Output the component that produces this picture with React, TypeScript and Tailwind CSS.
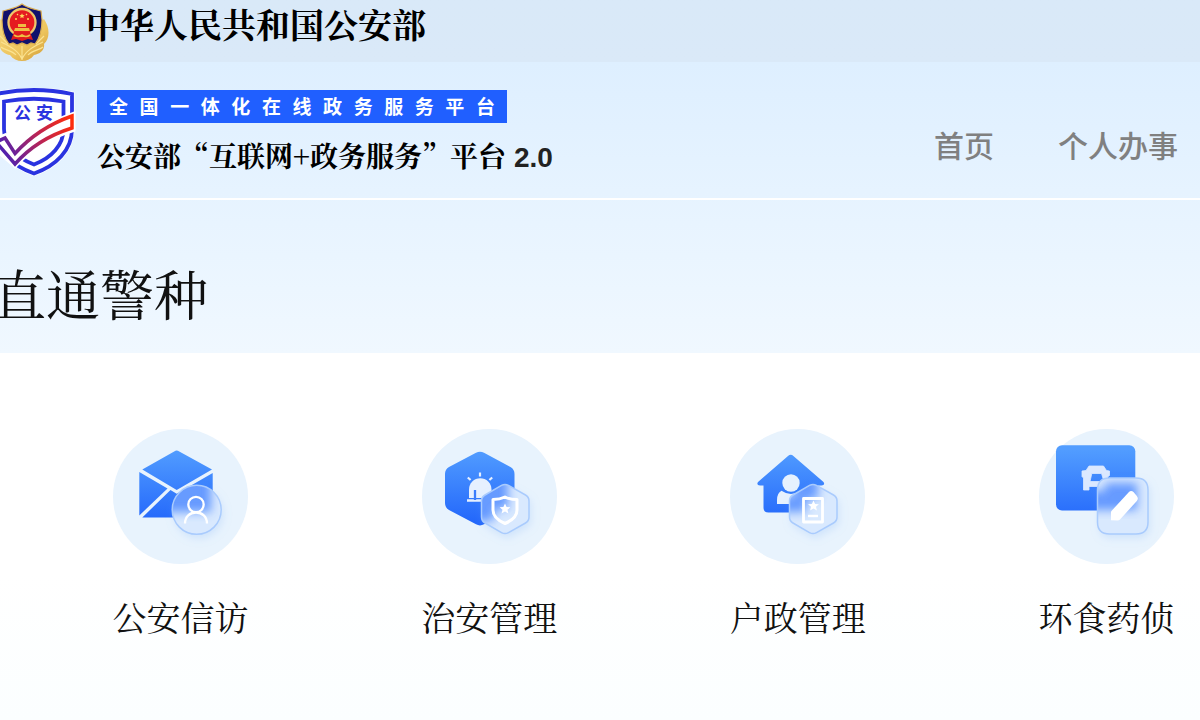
import type { ReactNode } from "react";

const SERVICES = [
  { label: "公安信访", icon: <MailIcon /> },
  { label: "治安管理", icon: <SirenIcon /> },
  { label: "户政管理", icon: <HouseIcon /> },
  { label: "环食药侦", icon: <CarIcon /> },
];

const BANNER = "全国一体化在线政务服务平台";

const HEX_BADGE = "M79.5 56.4q3.5-2 7 0L103.500 66q3.500 2 3.500 6v16q0 4-3.500 6L86.500 103.600q-3.500 2-7 0L63 94q-3.500-2-3.500-6V72q0-4 3.500-6Z";
const STAR = "M0-5.500 1.600-2 5.400-1.700 2.500.8 3.400 4.500 0 2.500-3.400 4.500-2.500.8-5.400-1.700-1.600-2Z";

// frosted badge: the shape behind it shows through, blurred
function Glass({ id, d, behind, children }: { id: string; d: string; behind: string; children: ReactNode }) {
  return (
    <>
      <defs>
        <clipPath id={`${id}-clip`}>
          <path d={d} />
        </clipPath>
        <filter id={`${id}-blur`} x="-30%" y="-30%" width="160%" height="160%">
          <feGaussianBlur stdDeviation="5" />
        </filter>
        <filter id={`${id}-shadow`} x="-40%" y="-40%" width="180%" height="180%">
          <feDropShadow dx="2" dy="4" stdDeviation="4" floodColor="#7fb0f5" floodOpacity="0.25" />
        </filter>
      </defs>
      <path d={d} fill="#d9e9fe" filter={`url(#${id}-shadow)`} />
      <g clipPath={`url(#${id}-clip)`}>
        <path d={behind} fill="#3f80ff" opacity="0.75" filter={`url(#${id}-blur)`} />
      </g>
      <path d={d} fill="none" stroke="#a9cbfd" strokeWidth="1.5" />
      {children}
    </>
  );
}

function IconDisc({ id, children }: { id: string; children: ReactNode }) {
  return (
    <svg viewBox="0 0 135 135" className="size-full" aria-hidden="true">
      <defs>
        <linearGradient id={`${id}-fill`} gradientUnits="userSpaceOnUse" x1="0" y1="20" x2="0" y2="92">
          <stop offset="0" stopColor="#529dff" />
          <stop offset="1" stopColor="#2468fb" />
        </linearGradient>
      </defs>
      {children}
    </svg>
  );
}

function MailIcon() {
  return (
    <IconDisc id="mail">
      <g fill="url(#mail-fill)">
        <path d="M62.500 21.800q1.200-.8 2.400 0L99 40.500 63.700 61 29.300 40.500Z" />
        <path d="M26.300 43 54.500 59.500 26.300 86.500Z" />
        <path d="M29.300 88.500 57.500 61l6.200 3.700 36-20.700v44.500Z" />
      </g>
      <Glass
        id="mail-glass"
        d="M59.200 80.800a24.500 24.500 0 1 1 49 0a24.500 24.500 0 1 1-49 0Z"
        behind="M26 43h72v40H26Z"
      >
        <g fill="none" stroke="#fff" strokeWidth="2.300">
          <circle cx="83" cy="75.500" r="7.700" />
          <path d="M72 94.500c0-7 5-11 11-11s11 4 11 11" />
        </g>
      </Glass>
    </IconDisc>
  );
}

function SirenIcon() {
  const hex = "M54 23.800q4-2.300 8 0L88.500 38q4 2.300 4 7v30q0 4.500-4 7L62 95.300q-4 2.300-8 0L27 81q-4-2.500-4-7V45q0-4.700 4-7Z";
  return (
    <IconDisc id="siren">
      <path d={hex} fill="url(#siren-fill)" />
      <path d="M47 69V60.500a11.200 11.200 0 0 1 22.500 0V69Z" fill="#e6f0ff" />
      <path d="M45 71.500h25" stroke="#e6f0ff" strokeWidth="2.500" />
      <path d="M53 61v10" stroke="#3b7dfc" strokeWidth="2.300" />
      <path d="M58 43.500v4M45.800 48.500l2.800 2.500M70.200 48.500l-2.800 2.500" stroke="#e6f0ff" strokeWidth="2.200" />
      <Glass id="siren-glass" d={HEX_BADGE} behind="M30 30h56v50H72v12H40Z">
        <path
          d="M83 68c4 2 8 2.500 12 2.500V81c0 6-5 10.500-12 13.500-7-3-12-7.500-12-13.500V70.500c4 0 8-.5 12-2.500Z"
          fill="none"
          stroke="#fff"
          strokeWidth="3"
          strokeLinejoin="round"
        />
        <path d={STAR} transform="translate(83 80)" fill="#fff" />
      </Glass>
    </IconDisc>
  );
}

function HouseIcon() {
  return (
    <IconDisc id="house">
      <path
        d="M58 27q2.700-2.500 5.400 0L93.500 53q2 3-2 3.500H88v22q0 5-5 5H38.500q-5 0-5-5v-22H30q-4-.5-2-3.500Z"
        fill="url(#house-fill)"
      />
      <circle cx="61" cy="54" r="8.700" fill="#e6f1fe" />
      <path d="M47 75v-4q0-7 4.500-9.300 9.500 6.500 19 0Q78 65 78 71v4Z" fill="#e6f1fe" />
      <Glass id="house-glass" d={HEX_BADGE} behind="M64 48h24v22H76v13H40V68h24Z">
        <path d="M73.500 69.500h19v23.500h-19Z" fill="none" stroke="#fff" strokeWidth="2.800" strokeLinejoin="round" />
        <path d={STAR} transform="translate(83.500 77)" fill="#fff" />
        <path d="M78 87h10" stroke="#fff" strokeWidth="2.400" />
      </Glass>
    </IconDisc>
  );
}

function CarIcon() {
  return (
    <IconDisc id="car">
      <rect x="17" y="16.200" width="79.300" height="65.300" rx="6" fill="url(#car-fill)" />
      <path
        d="M50 37h14.500l3 4.500 3 .5v4.500l-2 1.500V61h-5v-3.500H50V61h-5.500V49l-1.500-1.500V42l4-.5ZM52.800 44.500 51 52.500h14l-2.500-8Z"
        fill="#dbe8ff"
        stroke="#dbe8ff"
        strokeWidth="0.800"
        fillRule="evenodd"
      />
      <Glass
        id="car-glass"
        d="M70.500 49H97q12 0 12 12v32q0 12-12 12H70.500q-12 0-12-12V61q0-12 12-12Z"
        behind="M66 54h32v27H40V62h26Z"
      >
        <path
          d="M72 91.300V82.500L89.500 63.500q2.500-2.500 5-.5l3.300 4q2 2.500 0 5L81 90.500q-1 1-2.500 1Z"
          fill="#fff"
        />
      </Glass>
    </IconDisc>
  );
}

function PoliceEmblem() {
  return (
    <svg viewBox="0 0 56 60" className="h-15 w-14 shrink-0" aria-hidden="true">
      <defs>
        <linearGradient id="gold" x1="0" y1="0" x2="1" y2="1">
          <stop offset="0" stopColor="#f8dc85" />
          <stop offset="0.6" stopColor="#edc45c" />
          <stop offset="1" stopColor="#cf9a35" />
        </linearGradient>
      </defs>
      <path
        d="M6 17C0 26 0 36 6 42c-1 6 4 10 10 11 3 4 7 6 12 6s9-2 12-6c6-1 11-5 10-11 6-6 6-16 0-25L28 34Z"
        fill="url(#gold)"
      />
      <path
        d="M28 57C24 48 15 44 7 40M28 57c4-9 13-13 21-17M28 58V44M22 53C18 48 10 48 7 45M34 53c4-5 12-5 15-8M6 34l8 8M50 34l-8 8"
        fill="none"
        stroke="#fbe391"
        strokeWidth="1.200"
      />
      <path
        d="M28 2c5 4 12 5 19 7l1 9c0 12-3 19-7 24l-4-1-4 2-5-2-5 2-4-2-4 1C11 37 8 30 8 18l1-9c7-2 14-3 19-7Z"
        fill="#11116c"
        stroke="#d9ad52"
        strokeWidth="1.200"
      />
      <circle cx="28" cy="20.500" r="13.500" fill="#e51c20" stroke="#edc76a" strokeWidth="2.300" />
      <path d="M20 30h16l3 8-5-1-6 2-6-2-5 1Z" fill="#df1a1d" />
      <path d="M21 26h14l1 3H20ZM24 22h8v3h-8Z" fill="#efbd43" />
      <path d="M20 33q4 3 8 0 4 3 8 0" fill="none" stroke="#efbd43" strokeWidth="1.600" />
      <path d={STAR} transform="translate(28 14) scale(.5)" fill="#ffd95b" />
      <path d="M21 17h2M23 13l1-1M33 13l-1-1M35 17h-2" stroke="#ffd95b" strokeWidth="1.300" />
    </svg>
  );
}

function ShieldLogo() {
  return (
    <svg viewBox="0 0 84 90" className="h-[90px] w-[84px] shrink-0" aria-hidden="true">
      <defs>
        <linearGradient id="tick" gradientUnits="userSpaceOnUse" x1="10" y1="70" x2="80" y2="34">
          <stop offset="0" stopColor="#4a21b5" />
          <stop offset="0.55" stopColor="#bf2450" />
          <stop offset="1" stopColor="#ff2d0a" />
        </linearGradient>
      </defs>
      <path d="M3 6Q41-2 79 6V41c0 21-16 37-38 44.500C19 78 3 62 3 41Z" fill="#fff" stroke="#fff" strokeWidth="5" />
      <g fill="none" stroke="#2a33e0" strokeWidth="3.800">
        <path d="M3 6Q41-2 79 6V41c0 21-16 37-38 44.500C19 78 3 62 3 41Z" />
        <path d="M11 13.500Q41 8 70.500 13.500V41c0 16-12 29-29.500 35.500C23 70 11 57 11 41Z" />
      </g>
      <path d="M0 54 12 49 22 64Q45 40 79 28V41Q44 52 22 76L0 57Z" fill="#fff" stroke="#fff" strokeWidth="7" />
      <path
        d="M3 54 12 50 22 65.500Q45 40 79 28V40Q44 51 22 76Z"
        fill="#fff"
        stroke="url(#tick)"
        strokeWidth="3.500"
      />
      <g fontSize="17" fontWeight="700" fill="#2a33e0">
        <text x="21" y="31">公</text>
        <text x="43" y="31">安</text>
      </g>
    </svg>
  );
}

export default function App() {
  return (
    <div
      lang="zh-CN"
      className="flex min-h-screen flex-col overflow-hidden bg-white font-['Noto_Serif_CJK_SC','Noto_Sans_CJK_SC',serif] text-black"
    >
      <div className="flex h-[62px] items-start gap-9 bg-linear-to-b from-[#d9e9f8] to-[#dae9f8]">
        <div className="-ml-[6px] pt-[2px]">
          <PoliceEmblem />
        </div>
        <p className="pt-1 text-[34px] leading-10 font-bold whitespace-nowrap">中华人民共和国公安部</p>
      </div>

      <div className="bg-linear-to-b from-[#deefff] to-[#f0f8ff]">
        <header className="flex h-[138px] items-start border-b-2 border-white pt-[26px] pr-[22px] font-['Noto_Sans_CJK_SC',sans-serif]">
          <div className="-ml-[7px] shrink-0">
            <ShieldLogo />
          </div>
          <div className="ml-5 pt-[2px]">
            <p className="flex h-[33px] w-[410px] items-start justify-between bg-[#205fff] px-3 pt-1 text-[19px] leading-6 font-bold text-white">
              {BANNER.split("").map((char, i) => (
                <span key={i}>{char}</span>
              ))}
            </p>
            <div className="mt-3 flex items-baseline gap-2 whitespace-nowrap">
              <h1 className="font-['Noto_Serif_CJK_SC','Noto_Sans_CJK_SC',serif] text-[28px] leading-10 font-bold">
                公安部“互联网+政务服务”平台
              </h1>
              <span className="font-['Liberation_Sans',sans-serif] text-[28px] font-bold text-[#222]">2.0</span>
            </div>
          </div>
          <nav className="ml-auto flex gap-16 pt-8 text-[30px] leading-12 font-medium whitespace-nowrap text-[#808080]">
            <a href="#home">首页</a>
            <a href="#personal">个人办事</a>
          </nav>
        </header>

        <section className="h-[153px] pt-[61px]">
          <h2 className="-ml-2 text-[54px] leading-16 whitespace-nowrap text-[#111]">直通警种</h2>
        </section>
      </div>

      <main className="flex-1 bg-linear-to-b from-white from-60% to-[#fbfeff] pt-[76px] pr-[26px] pl-[113px]">
        <ul className="flex justify-between">
          {SERVICES.map(({ label, icon }) => (
            <li key={label}>
              <a href="#service" className="flex w-[135px] flex-col items-center">
                <span className="size-[135px] rounded-full bg-[#e8f3fd]">{icon}</span>
                <span className="mt-[29px] text-[34px] leading-12 whitespace-nowrap text-[#111]">{label}</span>
              </a>
            </li>
          ))}
        </ul>
      </main>
    </div>
  );
}
